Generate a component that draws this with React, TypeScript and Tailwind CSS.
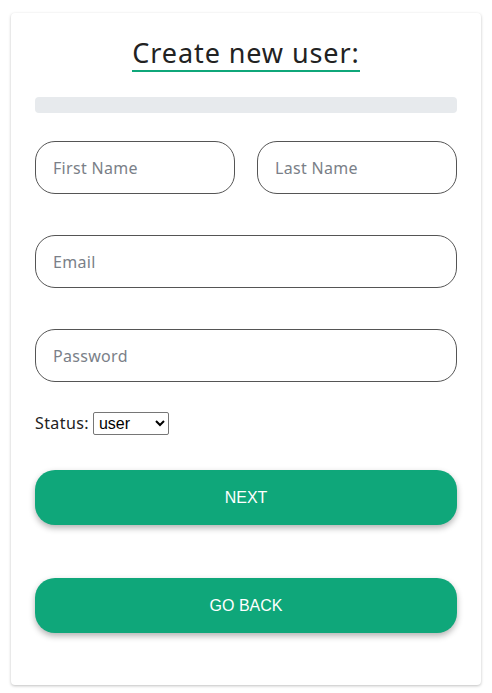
import React from "react"

const font = { fontFamily: '"Noto Sans", "Liberation Sans", sans-serif' }

function Field({ placeholder, type = "text" }: { placeholder: string; type?: string }) {
  return (
    <input
      type={type}
      placeholder={placeholder}
      className="h-[53px] w-full rounded-[20px] border border-[#555] bg-white px-[17px] text-[16px] tracking-[0.3px] text-[#333] outline-none placeholder:text-[#7a7f88]"
    />
  )
}

export default function App() {
  return (
    <div className="min-h-[693px] w-[492px] bg-white pt-[13px]" style={font}>
      <div className="mx-[11px] flex w-[470px] flex-col rounded-[4px] bg-white px-[24px] pb-[52px] pt-[23px] shadow-[0_1px_3px_rgba(0,0,0,0.25)]">
        <div className="flex justify-center">
          <h2 className="border-b-2 border-[#0fa77a] pb-[1px] text-[27px] leading-[33px] tracking-[0.9px] text-[#222]">
            Create new user:
          </h2>
        </div>

        <div className="mt-[25px] h-[16px] w-full rounded-[4px] bg-[#e7eaed]" />

        <div className="mt-[28px] flex gap-[22px]">
          <Field placeholder="First Name" />
          <Field placeholder="Last Name" />
        </div>

        <div className="mt-[41px]">
          <Field placeholder="Email" type="email" />
        </div>

        <div className="mt-[41px]">
          <Field placeholder="Password" type="password" />
        </div>

        <div className="mt-[29px] flex items-center gap-[4px] text-[16px] tracking-[0.4px] text-[#222]">
          <span>Status:</span>
          <select
            defaultValue="user"
            className="h-[23px] w-[76px] rounded-[2px] border border-[#767676] bg-white px-[1px] text-[16px] tracking-normal text-black"
            style={{ fontFamily: '"Liberation Sans", Arial, sans-serif' }}
          >
            <option value="user">user</option>
            <option value="admin">admin</option>
          </select>
        </div>

        <button
          className="mt-[35px] h-[55px] w-full rounded-[20px] bg-[#0fa77a] text-[16px] text-white shadow-[0_3px_6px_rgba(0,0,0,0.3)]"
          style={{ fontFamily: '"Liberation Sans", Arial, sans-serif' }}
        >
          NEXT
        </button>

        <button
          className="mt-[53px] h-[55px] w-full rounded-[20px] bg-[#0fa77a] text-[16px] text-white shadow-[0_3px_6px_rgba(0,0,0,0.3)]"
          style={{ fontFamily: '"Liberation Sans", Arial, sans-serif' }}
        >
          GO BACK
        </button>
      </div>
    </div>
  )
}
